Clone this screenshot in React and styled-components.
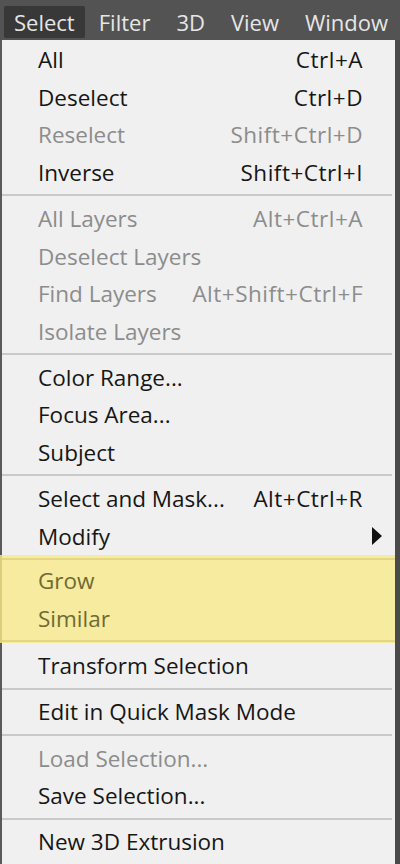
import React from "react";
import styled, { createGlobalStyle } from "styled-components";

const Global = createGlobalStyle`
  html, body { margin: 0; padding: 0; background: #4a4a4a; }
  body { font-family: "Open Sans", "Noto Sans", sans-serif; }
`;

const Page = styled.div`
  width: 400px;
  height: 864px;
  overflow: hidden;
  background: #4a4a4a;
  display: flex;
  flex-direction: column;
`;

const MenuBar = styled.div`
  height: 40px;
  flex: none;
  background: #535353;
  display: flex;
  align-items: stretch;
  padding: 6px 0 2px 4px;
  box-sizing: border-box;
`;

const BarItem = styled.div`
  display: flex;
  align-items: center;
  padding: 0 ${(p) => (p.$active ? "10px" : "12px")};
  margin-left: ${(p) => (p.$active ? "0" : "2px")};
  color: #e6e6e6;
  font-size: 22px;
  background: ${(p) => (p.$active ? "#383838" : "transparent")};
  border-radius: 2px;
  white-space: nowrap;
`;

const Dropdown = styled.div`
  width: 395px;
  flex: 1;
  background: #f0f0f0;
  border-left: 2px solid #5a5a5a;
  box-sizing: border-box;
  padding-top: 1px;
  display: flex;
  flex-direction: column;
`;

const Row = styled.div`
  height: 37.5px;
  flex: none;
  display: flex;
  align-items: center;
  justify-content: space-between;
  padding: 0 32px 0 36px;
  font-size: 22.5px;
  color: ${(p) => (p.$disabled ? "#8c8c8c" : "#161616")};
  white-space: nowrap;
`;

const Shortcut = styled.span`
  color: inherit;
  letter-spacing: 0.5px;
`;

const Separator = styled.div`
  height: 8.75px;
  flex: none;
  display: flex;
  align-items: center;
  padding: 0 3px 0 0;

  &::after {
    content: "";
    flex: 1;
    height: 2px;
    background: #c9c9c9;
  }
`;

const Highlight = styled.div`
  margin: 0 0 4px -2px;
  background: #f6eb9e;
  border-left: 2px solid #dccf78;
  padding: 3px 0 1px;
  flex: none;
`;

const HighlightInner = styled.div`
  border-top: 2px solid #e3d684;
  border-bottom: 2px solid #e3d684;
  padding: 2px 0 3px;
  display: flex;
  flex-direction: column;
  ${Row} {
    color: #6f6a33;
  }
`;

const Arrow = styled.span`
  width: 0;
  height: 0;
  border-top: 9px solid transparent;
  border-bottom: 9px solid transparent;
  border-left: 10px solid #111;
  margin-right: -19px;
`;

const groups = [
  [
    ["All", "Ctrl+A"],
    ["Deselect", "Ctrl+D"],
    ["Reselect", "Shift+Ctrl+D", true],
    ["Inverse", "Shift+Ctrl+I"],
  ],
  [
    ["All Layers", "Alt+Ctrl+A", true],
    ["Deselect Layers", "", true],
    ["Find Layers", "Alt+Shift+Ctrl+F", true],
    ["Isolate Layers", "", true],
  ],
  [["Color Range..."], ["Focus Area..."], ["Subject"]],
];

function Item({ label, shortcut, disabled, sub }) {
  return (
    <Row $disabled={disabled}>
      <span>{label}</span>
      {sub ? <Arrow /> : shortcut ? <Shortcut>{shortcut}</Shortcut> : null}
    </Row>
  );
}

export default function App() {
  return (
    <>
      <Global />
      <Page>
        <MenuBar>
          <BarItem $active>Select</BarItem>
          <BarItem>Filter</BarItem>
          <BarItem>3D</BarItem>
          <BarItem>View</BarItem>
          <BarItem>Window</BarItem>
        </MenuBar>
        <Dropdown>
          {groups.map((g, i) => (
            <React.Fragment key={i}>
              {g.map(([l, s, d]) => (
                <Item key={l} label={l} shortcut={s} disabled={d} />
              ))}
              <Separator />
            </React.Fragment>
          ))}
          <Item label="Select and Mask..." shortcut="Alt+Ctrl+R" />
          <Item label="Modify" sub />
          <Highlight>
            <HighlightInner>
              <Item label="Grow" />
              <Item label="Similar" />
            </HighlightInner>
          </Highlight>
          <Item label="Transform Selection" />
          <Separator />
          <Item label="Edit in Quick Mask Mode" />
          <Separator />
          <Item label="Load Selection..." disabled />
          <Item label="Save Selection..." />
          <Separator />
          <Item label="New 3D Extrusion" />
        </Dropdown>
      </Page>
    </>
  );
}
